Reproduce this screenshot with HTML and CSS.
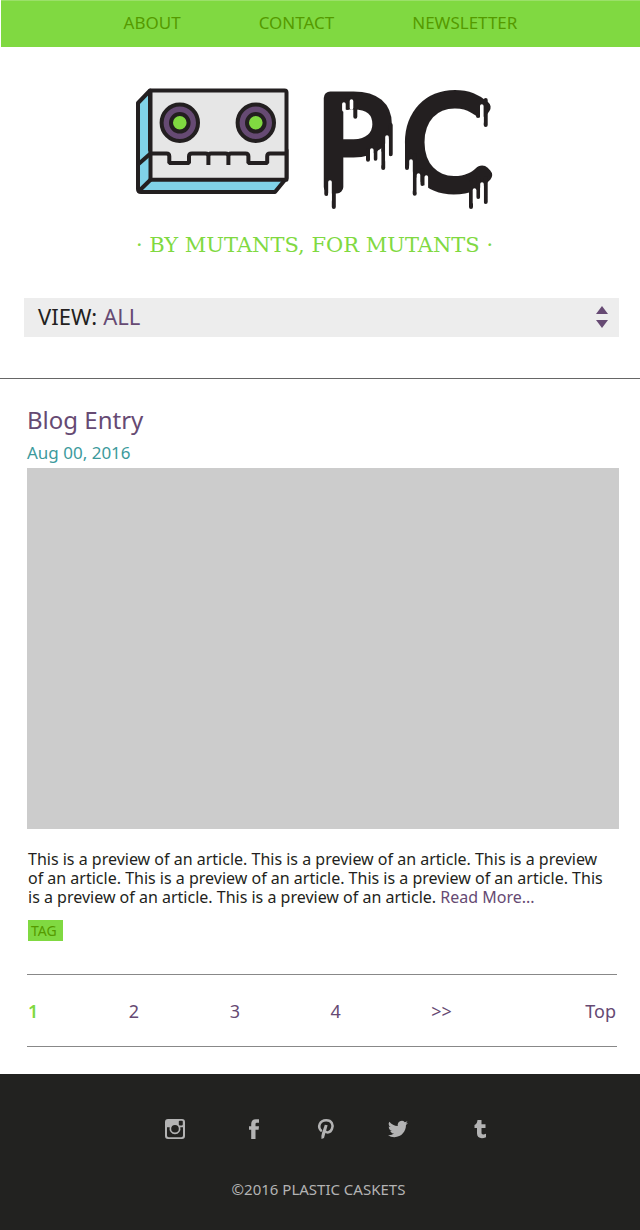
FILE: index.html
```html
<!DOCTYPE html>
<html lang="en">
<head>
<meta charset="utf-8">
<meta name="viewport" content="width=device-width, initial-scale=1">
<title>Plastic Caskets</title>
<link rel="stylesheet" href="styles.css">
</head>
<body>
<nav class="topnav" id="top">
  <a href="#about">ABOUT</a>
  <a href="#contact">CONTACT</a>
  <a href="#newsletter">NEWSLETTER</a>
</nav>

<header class="masthead">
  <svg class="logo" viewBox="136 88 352 122" role="img" aria-label="Plastic Caskets">
    <g stroke="#231f20" stroke-width="4" stroke-linejoin="round">
      <path fill="#80d2e8" d="M150 90.500 138 103V189Q138 192 141 192H275L286.500 178V150H150Z"/>
      <path fill="#e6e6e6" d="M150.500 90.500H284.500Q286.500 90.500 286.500 92.500V179.800H150.500Z"/>
      <path fill="none" d="M150.500 179.800 138.500 191.500M150.500 153.500 138 164.500"/>
      <path fill="none" stroke-linejoin="bevel" d="M150.500 153.500H166.500Q169.300 153.500 169.300 156.300V163H189V156.300Q189 153.500 192 153.500H205.500Q208.400 153.500 208.400 156.300V165M208.400 165V156.300Q208.400 153.500 211 153.500H225.500Q228.400 153.500 228.400 156.300V165M228.400 165V156.300Q228.400 153.500 231 153.500H245.500Q248.400 153.500 248.400 156.300V163H267.200V156.300Q267.200 153.500 270 153.500H286"/>
      <circle cx="179.800" cy="122.800" r="18.200" fill="#664a73"/>
      <circle cx="179.800" cy="122.800" r="8.800" fill="#80d941"/>
      <circle cx="255.800" cy="122.800" r="18.200" fill="#664a73"/>
      <circle cx="255.800" cy="122.800" r="8.800" fill="#80d941"/>
    </g>
    <g class="logo-letters">
      <text x="317" y="187">P</text>
      <text x="404" y="187">C</text>
    </g>
    <g fill="none" stroke="#231f20" stroke-width="4" stroke-linecap="round">
      <path d="M326.300 180V194M333.800 185V207M347.500 100V108M355.300 100V116.700M390.700 125V154.300M383.200 145V168M375.500 145V158.700M368 150V159.700"/>
      <path d="M407 140V168M414.700 155V193.700M422.300 170V184M478 100V116M485.700 100V125M485.700 178V202M478.200 178V197M471 182V207"/>
    </g>
    <g fill="none" stroke="#fff" stroke-width="3.600" stroke-linecap="round">
      <path d="M330 182V200M343.900 104V110M351.500 101V108M387 137V160M379.500 152V165M371.800 150V164"/>
      <path d="M411 161V190M418.500 175V192M426.300 177V188M481.800 106V122M482 184V203M474.500 190V203"/>
    </g>
  </svg>
  <p class="tagline">· BY MUTANTS, FOR MUTANTS ·</p>
  <div class="filter">
    <label for="view">VIEW:</label>
    <select id="view"><option>ALL</option></select>
    <svg class="arrows" viewBox="0 0 12 22" aria-hidden="true"><path fill="#664a73" d="M6 0 12 8H0ZM0 14H12L6 22Z"/></svg>
  </div>
</header>

<main>
  <article class="entry">
    <h1>Blog Entry</h1>
    <time datetime="2016-08">Aug 00, 2016</time>
    <div class="photo"></div>
    <p class="preview">This is a preview of an article. This is a preview of an article. This is a preview of an article. This is a preview of an article. This is a preview of an article. This is a preview of an article. This is a preview of an article. <a href="#entry">Read More...</a></p>
    <a class="tag" href="#tag">TAG</a>
  </article>
  <nav class="pager" aria-label="Pages">
    <a class="current" href="#p1" aria-current="page">1</a>
    <a href="#p2">2</a>
    <a href="#p3">3</a>
    <a href="#p4">4</a>
    <a href="#next">&gt;&gt;</a>
    <a class="to-top" href="#top">Top</a>
  </nav>
</main>

<footer class="footer">
  <div class="social">
    <a href="#instagram" aria-label="Instagram"><svg viewBox="0 0 20 20"><path fill-rule="evenodd" d="M3 0H17Q20 0 20 3V17Q20 20 17 20H3Q0 20 0 17V3Q0 0 3 0ZM13.800 2.400V5.600Q13.800 6.400 14.600 6.400H17Q17.800 6.400 17.800 5.600V2.400Q17.800 1.700 17 1.700H14.600Q13.800 1.700 13.800 2.400ZM2 8.200V16.500Q2 18.200 3.700 18.200H16.300Q18 18.200 18 16.500V8.200H15.300A5.500 5.500 0 1 1 4.700 8.200ZM10 6A3.800 3.800 0 1 0 10 13.600 3.800 3.800 0 0 0 10 6Z"/></svg></a>
    <a href="#facebook" aria-label="Facebook"><svg viewBox="0 0 20 20"><path d="M7.200 20V10.800H5V7.300H7.200V5Q7.200.200 11.800.200H15V3.800H12.800Q11.500 3.800 11.500 5.100V7.300H15L14.600 10.800H11.500V20Z"/></svg></a>
    <a href="#pinterest" aria-label="Pinterest"><svg viewBox="0 0 20 20"><path fill="none" stroke="#b3b3b3" stroke-width="2.500" stroke-linecap="round" d="M5 11.500C1.500 8 3.500 1.300 10.200 1.300 16 1.300 17.500 5.800 16 9.800 14.500 14 10.300 14.300 9 12"/><path d="M8.800 5.800 11.600 6.200 8 19 5.500 20Q5 17 6 14Z"/></svg></a>
    <a href="#twitter" aria-label="Twitter"><svg viewBox="0 0 24 24"><path d="M23.950 4.570a10 10 0 0 1-2.820.770 4.960 4.960 0 0 0 2.160-2.720c-.950.550-2 .960-3.130 1.180a4.920 4.920 0 0 0-8.380 4.480C7.690 8.100 4.070 6.130 1.640 3.160a4.920 4.920 0 0 0 1.520 6.570 4.900 4.900 0 0 1-2.230-.610v.060a4.920 4.920 0 0 0 3.950 4.830 5 5 0 0 1-2.210.080 4.940 4.940 0 0 0 4.600 3.420A9.870 9.870 0 0 1 0 19.540a14 14 0 0 0 7.550 2.210c9.050 0 14-7.500 14-13.980l-.020-.630a10 10 0 0 0 2.420-2.570z"/></svg></a>
    <a href="#tumblr" aria-label="Tumblr"><svg viewBox="0 0 20 20"><path d="M7.500 1H11.500V5.300H15.500V9H11.500V13.500C11.500 16 13.500 15.600 16 14.800V18.300C11 20.200 7 18.800 7 14.500V9H4.500V6C6.500 5.200 7.200 3.500 7.500 1Z"/></svg></a>
  </div>
  <p class="copyright">©2016 PLASTIC CASKETS</p>
</footer>
</body>
</html>
```
FILE: styles.css
```css
* { box-sizing: border-box; }
body {
  margin: 0;
  background: #fff;
  color: #231f20;
  font: 16px/19px "Noto Sans", "Open Sans", sans-serif;
}
a { color: #664a73; text-decoration: none; }
h1, p { margin: 0; font-weight: 400; }

.topnav {
  display: flex;
  justify-content: center;
  align-items: center;
  gap: 78px;
  height: 47px;
  padding-bottom: 4px;
  margin-left: 1px;
  border-top: 1px solid #9be06a;
  background: #80d941;
}
.topnav a { color: #559a00; font-size: 17px; }

.masthead {
  display: flex;
  flex-direction: column;
  align-items: center;
  padding: 41px 21px 41px 24px;
  border-bottom: 1px solid #666;
}
.logo { width: 352px; height: 122px; margin-right: 19px; overflow: visible; }
.logo-letters {
  fill: #231f20;
  stroke: #231f20;
  stroke-width: 13;
  stroke-linejoin: round;
  font: 300 127px/1 Lato, sans-serif;
}
.tagline {
  margin: 23px 14px 0 0;
  color: #80d941;
  font: 21px/24px "DejaVu Serif", serif;
}
.filter {
  position: relative;
  display: flex;
  align-items: center;
  align-self: stretch;
  gap: 6px;
  height: 39px;
  margin-top: 41px;
  padding: 0 0 2px 14px;
  background: #ededed;
  font-size: 22px;
}
.filter select {
  flex: 1;
  height: 37px;
  padding: 0;
  border: 0;
  background: transparent;
  color: #664a73;
  font: inherit;
  appearance: none;
}
.arrows {
  position: absolute;
  right: 11px;
  width: 12px;
  height: 22px;
  pointer-events: none;
}

main { padding: 25px 21px 27px 27px; }
.entry { display: flex; flex-direction: column; align-items: flex-start; }
.entry h1 { color: #664a73; font-size: 24px; line-height: 32px; }
.entry time { margin-top: 7px; color: #3c9a9c; font-size: 17px; }
.photo {
  align-self: stretch;
  aspect-ratio: 592 / 361;
  margin-top: 6px;
  background: #ccc;
}
.preview { margin: 21px 0 0; padding: 0 8px 0 1px; }
.tag {
  margin: 13px 0 0 1px;
  padding: 1px 6px 1px 3px;
  background: #80d941;
  color: #559a00;
  font-size: 14px;
}
.pager {
  display: grid;
  grid-template-columns: repeat(5, 101fr) 84fr;
  align-items: center;
  height: 73px;
  margin: 33px 2px 0 0;
  padding: 2px 1px 0;
  border: solid #888;
  border-width: 1px 0;
  font-size: 18px;
}
.pager .current { color: #80d941; font-weight: 600; }
.to-top { text-align: right; }

.footer {
  display: flex;
  flex-direction: column;
  align-items: center;
  padding: 45px 16px 31px;
  background: #222220;
  color: #b3b3b3;
}
.social {
  display: grid;
  grid-template-columns: 79px 72px 72px 82px 20px;
  margin-left: 14px;
}
.social svg { display: block; width: 20px; height: 20px; fill: #b3b3b3; }
.copyright { margin: 41px 3px 0 0; font-size: 15px; }
```
